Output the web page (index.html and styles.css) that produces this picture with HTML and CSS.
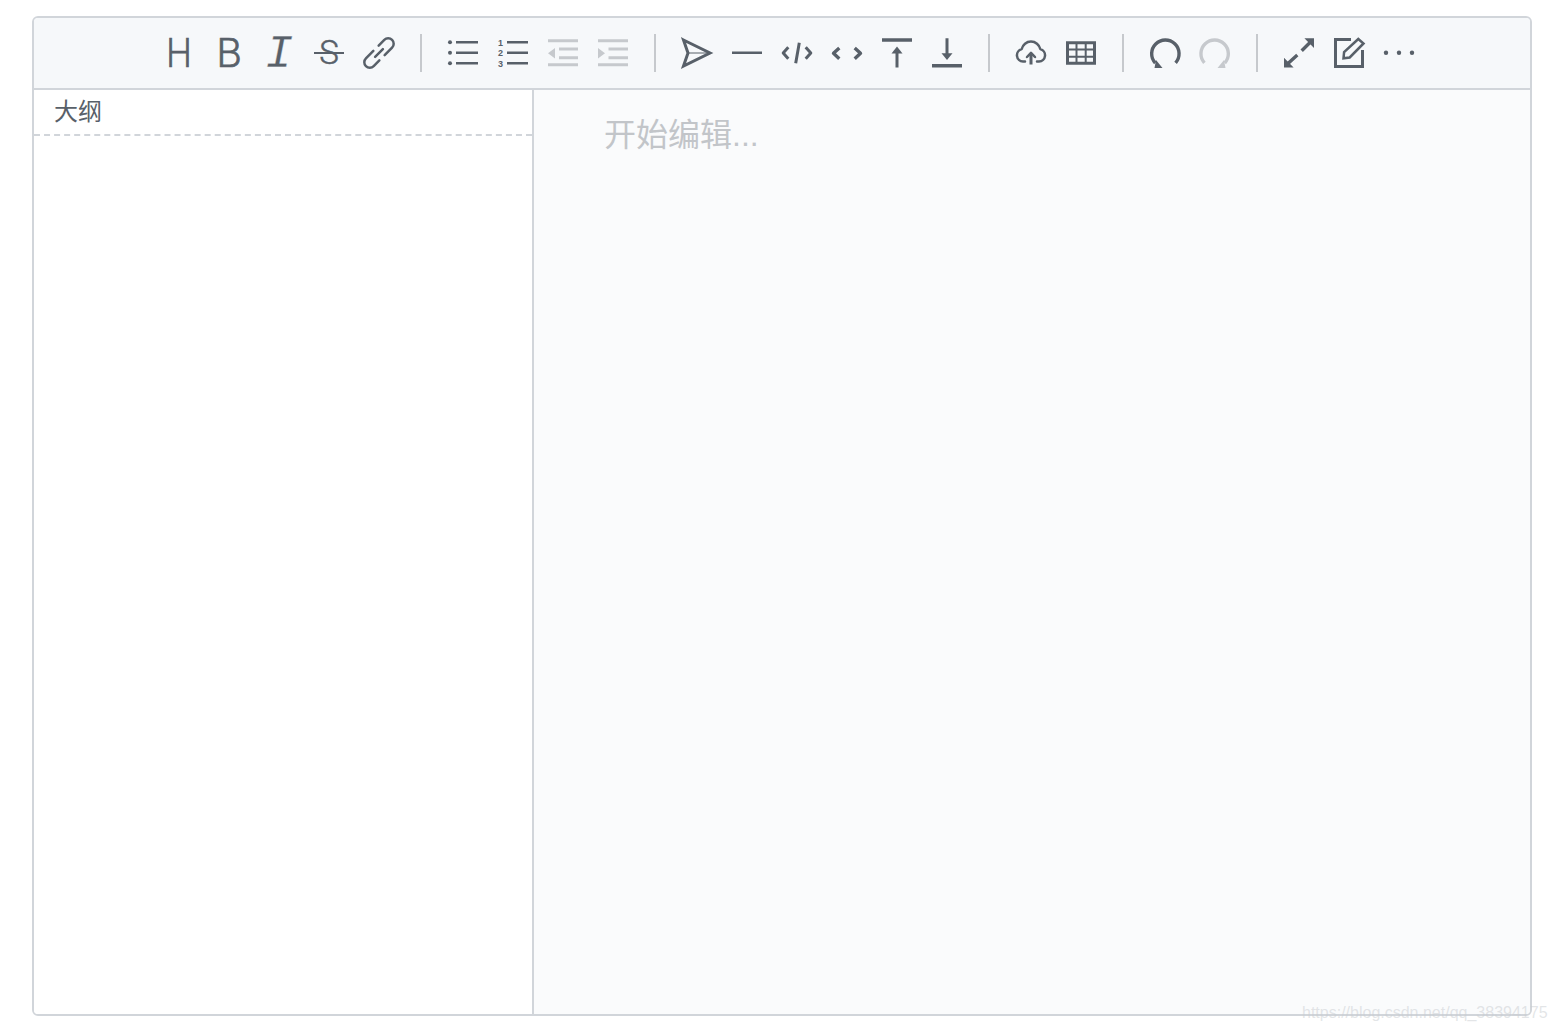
FILE: index.html
```html
<!DOCTYPE html>
<html lang="zh-CN">
<head>
    <meta charset="UTF-8">
    <title>大纲编辑器</title>
    <link rel="stylesheet" href="styles.css">
</head>
<body>
    <div class="editor">
        <div class="toolbar">
            <span class="tool glyph glyph-h">H</span>
            <span class="tool glyph glyph-b">B</span>
            <span class="tool glyph glyph-i">I</span>
            <span class="tool glyph glyph-s">S</span>
            <svg class="tool" viewBox="0 0 30 30"><g class="line wide round" transform="rotate(-45 15 15)"><path d="M12.5 9.5H2a5.5 5.5 0 0 0 0 11h8"/><path d="M17.5 20.5H28a5.5 5.5 0 0 0 0-11h-8"/><path d="M9.5 15h11"/></g></svg>
            <span class="divider"></span>

            <svg class="tool" viewBox="0 0 30 30"><g class="line wide"><path d="M8 4.3h22M8 14.8h22M8 25.3h22"/></g><g class="solid"><circle cx="2" cy="4.3" r="2"/><circle cx="2" cy="14.8" r="2"/><circle cx="2" cy="25.3" r="2"/></g></svg>
            <svg class="tool" viewBox="0 0 30 30"><g class="line wide"><path d="M9 4.3h21M9 14.8h21M9 25.3h21"/></g><g class="num"><text x="0" y="7.6">1</text><text x="0" y="18.1">2</text><text x="0" y="28.6">3</text></g></svg>
            <svg class="tool off" viewBox="0 0 30 30"><g class="line bold"><path d="M0 2.7h30M11 11h19M11 19.7h19M0 26.7h30"/></g><path class="solid" d="M7 10v10.5L0 15.2z"/></svg>
            <svg class="tool off" viewBox="0 0 30 30"><g class="line bold"><path d="M0 2.7h30M10.5 11H30M10.5 19.7H30M0 26.7h30"/></g><path class="solid" d="M0 10v10.5l7-5.3z"/></svg>
            <span class="divider"></span>

            <svg class="tool" viewBox="0 0 30 30"><g class="line bold"><path class="miter" d="M1.5 2L28 15 1.5 28 6 15z"/></g><path class="line hair" d="M6 15h22"/></svg>
            <svg class="tool" viewBox="0 0 30 30"><path class="line wide" d="M0 14.8h30"/></svg>
            <svg class="tool" viewBox="0 0 30 30"><g class="line bold"><path d="M6.3 9.3L1.2 15l5.1 5.7M23.7 9.3L28.8 15l-5.1 5.7M17.3 4.7l-3.6 20.6"/></g></svg>
            <svg class="tool" viewBox="0 0 30 30"><g class="line heavy"><path d="M7.3 10L1.5 15.3l5.8 5.4M22.7 10l5.8 5.3-5.8 5.4"/></g></svg>
            <svg class="tool" viewBox="0 0 30 30"><path class="line heavy" d="M0 2h30"/><path class="line bold" d="M15 29.5V14"/><path class="solid" d="M9.5 15.5L15 8.5l5.5 7z"/></svg>
            <svg class="tool" viewBox="0 0 30 30"><path class="line heavy" d="M0 27.8h30"/><path class="line bold" d="M15 .3V16"/><path class="solid" d="M9.5 15.3L15 22l5.5-6.7z"/></svg>
            <span class="divider"></span>

            <svg class="tool" viewBox="0 0 30 30"><path class="line wide round" d="M9 23.5H7a6.3 6.3 0 0 1-1.3-12.4 9.5 9.5 0 0 1 18.6 0A6.3 6.3 0 0 1 23 23.5h-2"/><path class="line bold" d="M15 26.5V16"/><path class="line wide round" d="M11 19l4-4.2 4 4.2"/></svg>
            <svg class="tool" viewBox="0 0 30 30"><path class="line bold miter" d="M1.5 4.7h27v20.6h-27z"/><path class="line" d="M1.5 11.5h27M1.5 18.7h27M10.5 4.7v20.6M19.7 4.7v20.6"/></svg>
            <span class="divider"></span>

            <svg class="tool" viewBox="0 0 30 30"><path class="line heavy" d="M25.6 24.8A13.7 13.7 0 1 0 5.3 25"/><path class="solid" d="M4.5 30h8l-6.5-8z"/></svg>
            <svg class="tool off flip" viewBox="0 0 30 30"><path class="line heavy" d="M25.6 24.8A13.7 13.7 0 1 0 5.3 25"/><path class="solid" d="M4.5 30h8l-6.5-8z"/></svg>
            <span class="divider"></span>

            <svg class="tool" viewBox="0 0 30 30"><path class="line heavy" d="M4 25.5L13.3 17M26 4.5L17.7 12.7"/><path class="solid" d="M0 29.5V19.8l9.6 9.7zM30 .3V10L20.4 .3z"/></svg>
            <svg class="tool" viewBox="0 0 30 30"><path class="line bold miter" d="M17 1.5H1.5v27h27V12"/><path class="line wide miter" d="M9.5 20.3l.6-6.3L24.3 1 29.5 5.5 15.7 19.5z"/></svg>
            <svg class="tool" viewBox="0 0 30 30"><g class="solid"><circle cx="2" cy="14.8" r="2.2"/><circle cx="15" cy="14.8" r="2.2"/><circle cx="28" cy="14.8" r="2.2"/></g></svg>
        </div>
        <div class="main">
            <div class="outline">
                <div class="outline-title">大纲</div>
            </div>
            <div class="content">
                <div class="placeholder">开始编辑...</div>
            </div>
        </div>
    </div>
    <div class="watermark">https://blog.csdn.net/qq_38394175</div>
</body>
</html>
```

FILE: styles.css
```css
* {
    margin: 0;
    padding: 0;
    box-sizing: border-box;
}

html, body {
    height: 100%;
    overflow: hidden;
}

body {
    background: #fff;
    padding: 16px 0 0 32px;
    font-family: "Liberation Sans", "Noto Sans CJK SC", sans-serif;
    color: #586069;
}

.editor {
    width: 1500px;
    height: 1000px;
    display: flex;
    flex-direction: column;
    border: 2px solid #d1d5da;
    border-radius: 6px;
    overflow: hidden;
}

.toolbar {
    height: 72px;
    flex: none;
    display: flex;
    align-items: center;
    justify-content: center;
    padding-left: 14px;
    background: #f6f8fa;
    border-bottom: 2px solid #d1d5da;
}

.tool {
    width: 30px;
    height: 30px;
    margin: 0 10px;
    flex: none;
    overflow: visible;
}

.tool.off {
    color: #c6c9cd;
}

.flip {
    transform: scaleX(-1);
}

.divider {
    width: 2px;
    height: 38px;
    margin: 0 16px;
    flex: none;
    background: #c6c9cd;
}

/* text buttons */
.glyph {
    position: relative;
    display: flex;
    align-items: center;
    justify-content: center;
    line-height: 30px;
}

.glyph-h,
.glyph-b {
    font-family: Roboto, sans-serif;
    font-weight: 300;
    font-size: 41px;
    -webkit-text-stroke: 0.7px #586069;
}

.glyph-h {
    transform: scaleX(0.88);
}

.glyph-i {
    padding-top: 4px;
    font-family: "Liberation Mono", monospace;
    font-style: italic;
    font-size: 47px;
    -webkit-text-stroke: 0.3px #f6f8fa;
}

.glyph-s {
    font-family: Roboto, sans-serif;
    font-weight: 300;
    font-size: 33px;
    -webkit-text-stroke: 0.5px #586069;
}

.glyph-s::after {
    content: "";
    position: absolute;
    left: 0;
    right: 0;
    top: 14px;
    height: 2px;
    background: #586069;
}

/* svg strokes */
.line {
    fill: none;
    stroke: currentColor;
    stroke-width: 2px;
    stroke-linecap: butt;
    stroke-linejoin: round;
}

.line.wide {
    stroke-width: 2.5px;
}

.line.bold {
    stroke-width: 3px;
}

.line.heavy {
    stroke-width: 3.4px;
}

.line.hair {
    stroke-width: 1px;
}

.round {
    stroke-linecap: round;
}

.miter {
    stroke-linejoin: miter;
}

.solid {
    fill: currentColor;
}

.num {
    fill: currentColor;
    font-family: "Liberation Sans", sans-serif;
    font-size: 9px;
    font-weight: bold;
}

.main {
    flex: 1;
    display: flex;
    min-height: 0;
}

.outline {
    width: 500px;
    flex: none;
    background: #fff;
    border-right: 2px solid #d1d5da;
}

.outline-title {
    height: 46px;
    padding: 0 20px;
    font-size: 24px;
    line-height: 44px;
    border-bottom: 2px dashed #d1d5da;
}

.content {
    flex: 1;
    background: #fafbfc;
    padding: 21px 70px;
}

.placeholder {
    font-size: 32px;
    line-height: 48px;
    color: #c2c5c9;
}

.watermark {
    position: absolute;
    left: 1302px;
    top: 1003px;
    font-size: 16px;
    line-height: 20px;
    white-space: nowrap;
    color: rgba(200, 204, 208, 0.5);
}
```
